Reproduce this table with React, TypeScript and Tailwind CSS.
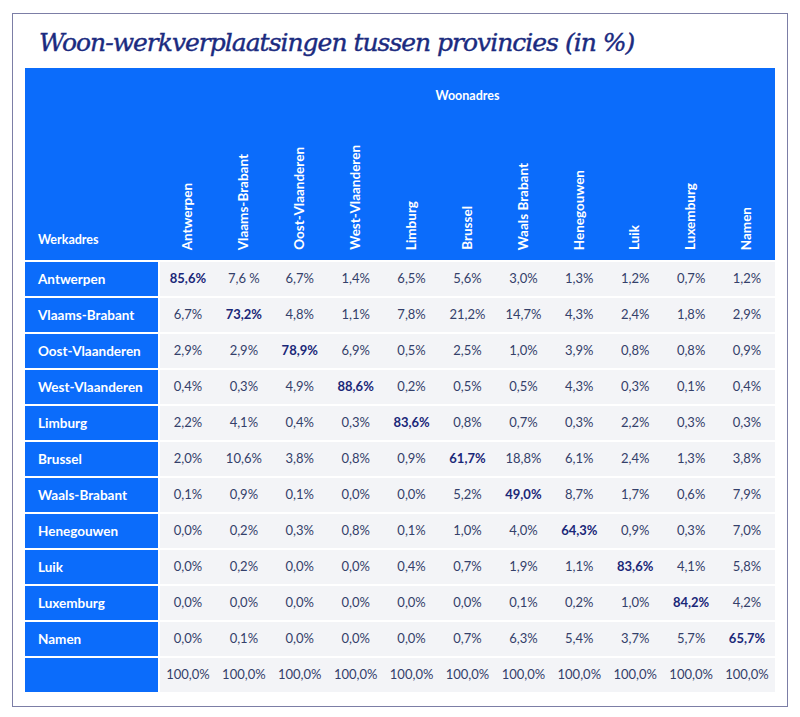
import React from 'react';

const provinces = [
  'Antwerpen',
  'Vlaams-Brabant',
  'Oost-Vlaanderen',
  'West-Vlaanderen',
  'Limburg',
  'Brussel',
  'Waals Brabant',
  'Henegouwen',
  'Luik',
  'Luxemburg',
  'Namen',
];

const rows: { label: string; values: string[] }[] = [
  { label: 'Antwerpen', values: ['85,6%', '7,6 %', '6,7%', '1,4%', '6,5%', '5,6%', '3,0%', '1,3%', '1,2%', '0,7%', '1,2%'] },
  { label: 'Vlaams-Brabant', values: ['6,7%', '73,2%', '4,8%', '1,1%', '7,8%', '21,2%', '14,7%', '4,3%', '2,4%', '1,8%', '2,9%'] },
  { label: 'Oost-Vlaanderen', values: ['2,9%', '2,9%', '78,9%', '6,9%', '0,5%', '2,5%', '1,0%', '3,9%', '0,8%', '0,8%', '0,9%'] },
  { label: 'West-Vlaanderen', values: ['0,4%', '0,3%', '4,9%', '88,6%', '0,2%', '0,5%', '0,5%', '4,3%', '0,3%', '0,1%', '0,4%'] },
  { label: 'Limburg', values: ['2,2%', '4,1%', '0,4%', '0,3%', '83,6%', '0,8%', '0,7%', '0,3%', '2,2%', '0,3%', '0,3%'] },
  { label: 'Brussel', values: ['2,0%', '10,6%', '3,8%', '0,8%', '0,9%', '61,7%', '18,8%', '6,1%', '2,4%', '1,3%', '3,8%'] },
  { label: 'Waals-Brabant', values: ['0,1%', '0,9%', '0,1%', '0,0%', '0,0%', '5,2%', '49,0%', '8,7%', '1,7%', '0,6%', '7,9%'] },
  { label: 'Henegouwen', values: ['0,0%', '0,2%', '0,3%', '0,8%', '0,1%', '1,0%', '4,0%', '64,3%', '0,9%', '0,3%', '7,0%'] },
  { label: 'Luik', values: ['0,0%', '0,2%', '0,0%', '0,0%', '0,4%', '0,7%', '1,9%', '1,1%', '83,6%', '4,1%', '5,8%'] },
  { label: 'Luxemburg', values: ['0,0%', '0,0%', '0,0%', '0,0%', '0,0%', '0,0%', '0,1%', '0,2%', '1,0%', '84,2%', '4,2%'] },
  { label: 'Namen', values: ['0,0%', '0,1%', '0,0%', '0,0%', '0,0%', '0,7%', '6,3%', '5,4%', '3,7%', '5,7%', '65,7%'] },
];

const total = Array(11).fill('100,0%');

export default function App() {
  return (
    <div className="w-[800px] h-[717px] bg-white pt-[13px] pl-[12px] font-['Lato',sans-serif]">
      <div className="w-[776px] h-[694px] border border-[#7c7ea6] pt-[12px] px-[12px]">
        {/* Title */}
        <h1 className="pl-[14px] h-[42px] text-[25px] leading-[34px] italic text-[#1b2b80] font-['DejaVu_Serif',serif] tracking-[-1px] [-webkit-text-stroke:0.4px_#1b2b80]">
          Woon-werkverplaatsingen tussen provincies (in %)
        </h1>

        {/* Header */}
        <div className="flex h-[192px] bg-[#0b6cfb] text-white font-bold">
          <div className="w-[135px] flex items-end pl-[13px] pb-[10px] text-[12.5px]">Werkadres</div>
          <div className="flex-1 flex flex-col">
            <div className="h-[56px] flex items-center justify-center text-[12.5px]">Woonadres</div>
            <div className="flex-1 flex">
              {provinces.map((p) => (
                <div key={p} className="flex-1 flex justify-center items-end pb-[10px]">
                  <span className="[writing-mode:vertical-rl] rotate-180 whitespace-nowrap text-[13.5px] leading-none">
                    {p}
                  </span>
                </div>
              ))}
            </div>
          </div>
        </div>

        {/* Body */}
        <div className="flex flex-col gap-[2px] mt-[2px]">
          {rows.map((r, ri) => (
            <div key={r.label} className="flex h-[34px]">
              <div className="w-[133px] mr-[2px] bg-[#0b6cfb] text-white font-bold text-[13.5px] flex items-center pl-[13px]">
                {r.label}
              </div>
              <div className="flex-1 flex bg-[#f3f4f7]">
                {r.values.map((v, ci) => (
                  <div
                    key={ci}
                    className={
                      ci === ri
                        ? 'flex-1 flex items-center justify-center text-[13px] font-bold text-[#1a2778]'
                        : 'flex-1 flex items-center justify-center text-[13px] text-[#34406a]'
                    }
                  >
                    {v}
                  </div>
                ))}
              </div>
            </div>
          ))}
          <div className="flex h-[34px]">
            <div className="w-[133px] mr-[2px] bg-[#0b6cfb]" />
            <div className="flex-1 flex bg-[#f3f4f7]">
              {total.map((v, ci) => (
                <div key={ci} className="flex-1 flex items-center justify-center text-[13px] text-[#34406a]">
                  {v}
                </div>
              ))}
            </div>
          </div>
        </div>
      </div>
    </div>
  );
}
